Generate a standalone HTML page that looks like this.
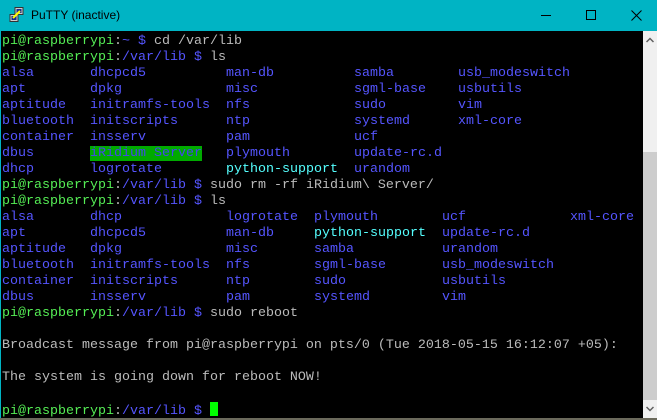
<!DOCTYPE html>
<html><head><meta charset="utf-8"><style>
html,body{margin:0;padding:0;width:657px;height:420px;overflow:hidden;background:#00b4c4}
#title{position:absolute;left:0;top:0;width:657px;height:31px;background:#00b4c4}
#title .t{position:absolute;left:31px;top:8px;font:12px "Liberation Sans",sans-serif;color:#000}
#term{position:absolute;left:1px;top:31px;width:642px;height:387px;background:#000;overflow:hidden}
#in{position:absolute;left:0;top:2px;width:642px;height:387px}
#sb{position:absolute;left:643px;top:31px;width:14px;height:387px;background:#f0f0f0}
#thumb{position:absolute;left:0;top:121px;width:14px;height:248px;background:#cdcdcd}
#bot{position:absolute;left:0;top:418px;width:657px;height:2px;background:#6b6a5c}
.r{position:absolute;left:1px;height:16px;line-height:16px;font:13.33px "Liberation Mono",monospace;white-space:pre;color:#bbb}
.r i{font-style:normal;display:inline-block}
.g{color:#55ee55}.b{color:#5555ff}.c{color:#55ffff}.w{color:#bbb}
.hl{background:#00aa00;color:#4444ee}
</style></head><body>
<div id="title">
<svg style="position:absolute;left:9px;top:7px" width="16" height="16" viewBox="0 0 16 16">
<rect x="6" y="0.5" width="8" height="7" fill="#ccc" stroke="#333"/><rect x="7.5" y="2" width="5" height="4" fill="#1a2a8a"/>
<rect x="1" y="7.5" width="8" height="7" fill="#ccc" stroke="#333"/><rect x="2.5" y="9" width="5" height="4" fill="#1a2a8a"/>
<path d="M4 11 L11 4" stroke="#ff0" stroke-width="2"/></svg>
<div class="t">PuTTY (inactive)</div>
<div style="position:absolute;left:541px;top:15px;width:10px;height:1px;background:#000"></div>
<div style="position:absolute;left:586px;top:10px;width:8px;height:8px;border:1px solid #000"></div>
<svg style="position:absolute;left:631px;top:10px" width="11" height="11"><path d="M0.5 0.5L10.5 10.5M10.5 0.5L0.5 10.5" stroke="#000" stroke-width="1"/></svg>
</div>
<div id="term"><div id="in">
<div class="r" style="top:1px"><span class="g">pi@raspberrypi</span><span class="w">:</span><span class="b">~ $ </span>cd /var/lib</div>
<div class="r" style="top:17px"><span class="g">pi@raspberrypi</span><span class="w">:</span><span class="b">/var/lib $ </span>ls</div>
<div class="r b" style="top:33px"><i style="width:88px">alsa</i><i style="width:136px">dhcpcd5</i><i style="width:128px">man-db</i><i style="width:104px">samba</i>usb_modeswitch</div>
<div class="r b" style="top:49px"><i style="width:88px">apt</i><i style="width:136px">dpkg</i><i style="width:128px">misc</i><i style="width:104px">sgml-base</i>usbutils</div>
<div class="r b" style="top:65px"><i style="width:88px">aptitude</i><i style="width:136px">initramfs-tools</i><i style="width:128px">nfs</i><i style="width:104px">sudo</i>vim</div>
<div class="r b" style="top:81px"><i style="width:88px">bluetooth</i><i style="width:136px">initscripts</i><i style="width:128px">ntp</i><i style="width:104px">systemd</i>xml-core</div>
<div class="r b" style="top:97px"><i style="width:88px">container</i><i style="width:136px">insserv</i><i style="width:128px">pam</i><i style="width:104px">ucf</i></div>
<div class="r b" style="top:113px"><i style="width:88px">dbus</i><i style="width:136px"><span class="hl">iRidium Server</span></i><i style="width:128px">plymouth</i><i style="width:104px">update-rc.d</i></div>
<div class="r b" style="top:129px"><i style="width:88px">dhcp</i><i style="width:136px">logrotate</i><i style="width:128px" class="c">python-support</i><i style="width:104px">urandom</i></div>
<div class="r" style="top:145px"><span class="g">pi@raspberrypi</span><span class="w">:</span><span class="b">/var/lib $ </span>sudo rm -rf iRidium\ Server/</div>
<div class="r" style="top:161px"><span class="g">pi@raspberrypi</span><span class="w">:</span><span class="b">/var/lib $ </span>ls</div>
<div class="r b" style="top:177px"><i style="width:88px">alsa</i><i style="width:136px">dhcp</i><i style="width:88px">logrotate</i><i style="width:128px">plymouth</i><i style="width:128px">ucf</i>xml-core</div>
<div class="r b" style="top:193px"><i style="width:88px">apt</i><i style="width:136px">dhcpcd5</i><i style="width:88px">man-db</i><i style="width:128px" class="c">python-support</i><i style="width:128px">update-rc.d</i></div>
<div class="r b" style="top:209px"><i style="width:88px">aptitude</i><i style="width:136px">dpkg</i><i style="width:88px">misc</i><i style="width:128px">samba</i><i style="width:128px">urandom</i></div>
<div class="r b" style="top:225px"><i style="width:88px">bluetooth</i><i style="width:136px">initramfs-tools</i><i style="width:88px">nfs</i><i style="width:128px">sgml-base</i><i style="width:128px">usb_modeswitch</i></div>
<div class="r b" style="top:241px"><i style="width:88px">container</i><i style="width:136px">initscripts</i><i style="width:88px">ntp</i><i style="width:128px">sudo</i><i style="width:128px">usbutils</i></div>
<div class="r b" style="top:257px"><i style="width:88px">dbus</i><i style="width:136px">insserv</i><i style="width:88px">pam</i><i style="width:128px">systemd</i><i style="width:128px">vim</i></div>
<div class="r" style="top:273px"><span class="g">pi@raspberrypi</span><span class="w">:</span><span class="b">/var/lib $ </span>sudo reboot</div>
<div class="r" style="top:305px">Broadcast message from pi@raspberrypi on pts/0 (Tue 2018-05-15 16:12:07 +05):</div>
<div class="r" style="top:337px">The system is going down for reboot NOW!</div>
<div class="r" style="top:369px"><span class="g">pi@raspberrypi</span><span class="w">:</span><span class="b">/var/lib $ </span><span style="display:inline-block;width:8px;height:14px;background:#00ff00;vertical-align:-2px"></span></div>
</div></div>
<div id="sb"><div id="thumb"></div>
<svg style="position:absolute;left:3px;top:6px" width="8" height="6"><path d="M0.5 5L4 1.5L7.5 5" fill="none" stroke="#606060" stroke-width="1.5"/></svg>
<svg style="position:absolute;left:3px;top:375px" width="8" height="6"><path d="M0.5 1L4 4.5L7.5 1" fill="none" stroke="#606060" stroke-width="1.5"/></svg>
</div>
<div id="bot"></div>
</body></html>
